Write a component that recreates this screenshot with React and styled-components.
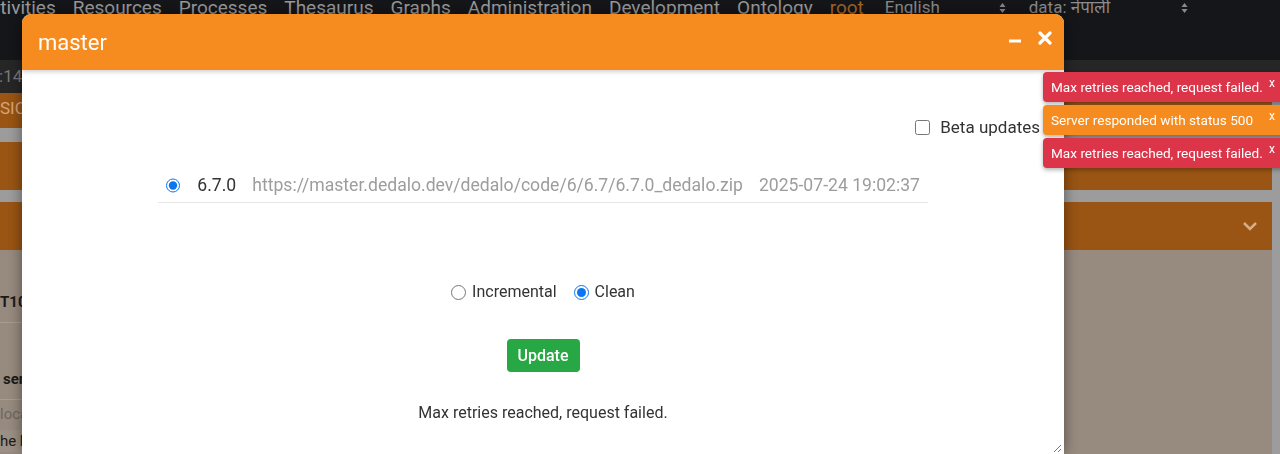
import React from "react";
import styled, { createGlobalStyle } from "styled-components";

const GlobalStyle = createGlobalStyle`
  html, body {
    margin: 0;
    padding: 0;
    height: 100%;
    overflow: hidden;
    background: #9c9c9c;
    font-family: Roboto, "Noto Sans", "Liberation Sans", sans-serif;
  }
`;

const navItems = [
  "Activities",
  "Resources",
  "Processes",
  "Thesaurus",
  "Graphs",
  "Administration",
  "Development",
  "Ontology",
];

const toasts = [
  { kind: "error", text: "Max retries reached, request failed." },
  { kind: "warning", text: "Server responded with status 500" },
  { kind: "error", text: "Max retries reached, request failed." },
];

export default function App() {
  return (
    <>
      <GlobalStyle />
      <Page>
        <TopNav>
          <NavList>
            {navItems.map((item) => (
              <NavItem key={item}>{item}</NavItem>
            ))}
            <NavItem $user>root</NavItem>
            <NavSelect $width={121}>
              English
              <UpDown />
            </NavSelect>
            <NavSelect $width={159}>
              data: नेपाली
              <UpDown />
            </NavSelect>
          </NavList>
        </TopNav>
        <SubBar>12:14:32</SubBar>
        <SectionBar>VERSION</SectionBar>
        <Panel $top={14} />
        <Panel $top={12}>
          <Chevron />
        </Panel>
        <Content>
          <ContentRow $bold $line>T1000</ContentRow>
          <ContentRow $bold $line $gap={45} $indent={3}>
            server
          </ContentRow>
          <ContentRow $muted>localhost</ContentRow>
          <ContentRow $last $indent={-5}>
            the last
          </ContentRow>
        </Content>
      </Page>

      <Modal>
        <ModalHeader>
          <ModalTitle>master</ModalTitle>
          <HeaderTools>
            <svg width="14" height="14" viewBox="0 0 14 14">
              <path d="M1 10h12" stroke="#fff" strokeWidth="3" />
            </svg>
            <svg width="14" height="14" viewBox="0 0 14 14">
              <path
                d="M2 2l10 10M12 2L2 12"
                stroke="#fff"
                strokeWidth="3.2"
                strokeLinecap="round"
              />
            </svg>
          </HeaderTools>
        </ModalHeader>
        <ModalBody>
          <BetaLabel>
            <Checkbox type="checkbox" />
            Beta updates
          </BetaLabel>
          <VersionList>
            <VersionRow>
              <Radio type="radio" name="version" defaultChecked />
              <VersionName>6.7.0</VersionName>
              <VersionMeta>
                https://master.dedalo.dev/dedalo/code/6/6.7/6.7.0_dedalo.zip
              </VersionMeta>
              <VersionMeta>2025-07-24 19:02:37</VersionMeta>
            </VersionRow>
          </VersionList>
          <ModeGroup>
            <ModeLabel>
              <Radio type="radio" name="mode" />
              Incremental
            </ModeLabel>
            <ModeLabel>
              <Radio type="radio" name="mode" defaultChecked />
              Clean
            </ModeLabel>
          </ModeGroup>
          <UpdateButton>Update</UpdateButton>
          <Message>Max retries reached, request failed.</Message>
        </ModalBody>
        <ResizeGrip width="10" height="10" viewBox="0 0 10 10">
          <path d="M9 2L2 9M9 6L6 9" stroke="#777" strokeWidth="1" />
        </ResizeGrip>
      </Modal>

      <ToastStack>
        {toasts.map((t, i) => (
          <Toast key={i} $kind={t.kind}>
            {t.text}
            <ToastClose>x</ToastClose>
          </Toast>
        ))}
      </ToastStack>
    </>
  );
}

const UpDown = () => (
  <UpDownIcon width="7" height="12" viewBox="0 0 7 12">
    <path d="M3.5 1L6.5 5H0.5z" fill="#8a8a8a" />
    <path d="M3.5 11L6.5 7H0.5z" fill="#8a8a8a" />
  </UpDownIcon>
);

const Chevron = () => (
  <ChevronIcon width="16" height="10" viewBox="0 0 16 10">
    <path
      d="M2 2l6 6 6-6"
      fill="none"
      stroke="rgba(255,235,215,0.6)"
      strokeWidth="2.5"
    />
  </ChevronIcon>
);

//
// Background page
//

const Page = styled.div`
  height: 454px;
  display: flex;
  flex-direction: column;
`;

const TopNav = styled.nav`
  height: 60px;
  background: #151619;
  overflow: hidden;
`;

const NavList = styled.div`
  display: flex;
  align-items: center;
  gap: 17px;
  margin: -2px 0 0 -22px;
  font-size: 19px;
  line-height: 19px;
  white-space: nowrap;
`;

const NavItem = styled.span`
  color: ${(p) => (p.$user ? "#a2672a" : "#9b9b9b")};
  ${(p) => p.$user && "margin-right: 4px;"}
`;

const NavSelect = styled.span`
  display: flex;
  align-items: center;
  justify-content: space-between;
  width: ${(p) => p.$width}px;
  color: #8c8c8c;
  font-size: 17px;
  margin-right: 6px;
`;

const UpDownIcon = styled.svg`
  flex: none;
`;

const SubBar = styled.div`
  height: 33px;
  background: #262626;
  color: #7a7a7a;
  font-size: 17px;
  line-height: 33px;
  text-indent: -20px;
`;

const SectionBar = styled.div`
  height: 35px;
  background: #9a5413;
  color: #d6a67a;
  font-size: 17px;
  line-height: 30px;
  margin-right: 8px;
  text-indent: -31px;
`;

const Panel = styled.div`
  height: 48px;
  margin: ${(p) => p.$top}px 8px 0 0;
  background: #9a5413;
  display: flex;
  align-items: center;
  justify-content: flex-end;
  padding-right: 14px;
`;

const ChevronIcon = styled.svg`
  display: block;
`;

const Content = styled.div`
  flex: 1;
  margin-right: 8px;
  background: #978b7f;
  padding-top: 41px;
  display: flex;
  flex-direction: column;
  align-items: flex-start;
`;

const ContentRow = styled.div`
  width: 420px;
  font-size: 15px;
  line-height: 22px;
  white-space: nowrap;
  color: ${(p) => (p.$muted ? "#6f665d" : "#1c1a18")};
  font-weight: ${(p) => (p.$bold ? 700 : 400)};
  text-indent: ${(p) => p.$indent || 0}px;
  margin-top: ${(p) => p.$gap || 0}px;
  padding-bottom: ${(p) => (p.$line ? "9px" : "0")};
  border-bottom: ${(p) => (p.$line ? "1px solid #a89d91" : "none")};
  ${(p) => p.$muted && "padding-top: 3px;"}
  ${(p) => p.$last && "margin-top: 5px; background: #9b9085;"}
`;

//
// Modal
//

const Modal = styled.div`
  position: fixed;
  left: 22px;
  top: 14px;
  width: 1042px;
  height: 440px;
  background: #fff;
  border-radius: 9px 9px 0 0;
  box-shadow: 0 0 14px rgba(0, 0, 0, 0.45);
  display: flex;
  flex-direction: column;
  overflow: hidden;
`;

const ModalHeader = styled.header`
  position: relative;
  z-index: 1;
  flex: none;
  height: 56px;
  display: flex;
  align-items: center;
  padding: 0 12px 0 16px;
  background: #f68b1f;
  color: #fff;
  box-shadow: 0 2px 4px rgba(0, 0, 0, 0.18);
`;

const ModalTitle = styled.h1`
  margin: 0;
  font-size: 22px;
  font-weight: 400;
`;

const HeaderTools = styled.div`
  margin-left: auto;
  align-self: flex-start;
  margin-top: 17px;
  display: flex;
  align-items: center;
  gap: 16px;

  svg {
    display: block;
  }
`;

const ModalBody = styled.div`
  flex: 1;
  display: flex;
  flex-direction: column;
  align-items: center;
  padding: 0 24px;
  color: #333;
`;

const BetaLabel = styled.label`
  align-self: flex-end;
  margin-top: 47px;
  display: flex;
  align-items: center;
  gap: 10px;
  font-size: 17px;
  line-height: 20px;
`;

const Checkbox = styled.input`
  width: 15px;
  height: 15px;
  margin: 0 0 0 -3px;
`;

const VersionList = styled.div`
  width: 770px;
  margin-top: 31px;
`;

const VersionRow = styled.label`
  display: flex;
  align-items: center;
  padding: 5px 8px;
  line-height: 24px;
  font-size: 17.6px;
  border-bottom: 1px solid #e6e6e6;
  white-space: nowrap;
`;

const Radio = styled.input`
  width: 15px;
  height: 15px;
  margin: 0;
  accent-color: #0b76f0;
`;

const VersionName = styled.span`
  margin-left: 17px;
  color: #333;
`;

const VersionMeta = styled.span`
  margin-left: 16px;
  color: #9d9d9d;
`;

const ModeGroup = styled.div`
  margin-top: 79px;
  display: flex;
  align-items: center;
  gap: 17px;
  font-size: 16px;
  line-height: 20px;
`;

const ModeLabel = styled.label`
  display: flex;
  align-items: center;
  gap: 6px;
`;

const UpdateButton = styled.button`
  margin-top: 37px;
  height: 33px;
  padding: 0 11px;
  border: 0;
  border-radius: 4px;
  background: #28a745;
  color: #fff;
  font-family: inherit;
  font-size: 16px;
  font-weight: 500;
`;

const Message = styled.p`
  margin: 31px 0 0;
  font-size: 16px;
  line-height: 20px;
`;

const ResizeGrip = styled.svg`
  position: absolute;
  right: 2px;
  bottom: 1px;
`;

//
// Notifications
//

const ToastStack = styled.div`
  position: fixed;
  top: 72px;
  left: 1043px;
  width: 245px;
  display: flex;
  flex-direction: column;
  gap: 3px;
`;

const Toast = styled.div`
  position: relative;
  height: 30px;
  padding-left: 8px;
  border-radius: 4px;
  background: ${(p) => (p.$kind === "error" ? "#dc354a" : "#f68b1f")};
  color: #fff;
  font-size: 13.6px;
  line-height: 30px;
  white-space: nowrap;
  box-shadow: 0 2px 4px rgba(0, 0, 0, 0.3);
`;

const ToastClose = styled.span`
  position: absolute;
  top: -4px;
  right: 13px;
  font-size: 12px;
`;
